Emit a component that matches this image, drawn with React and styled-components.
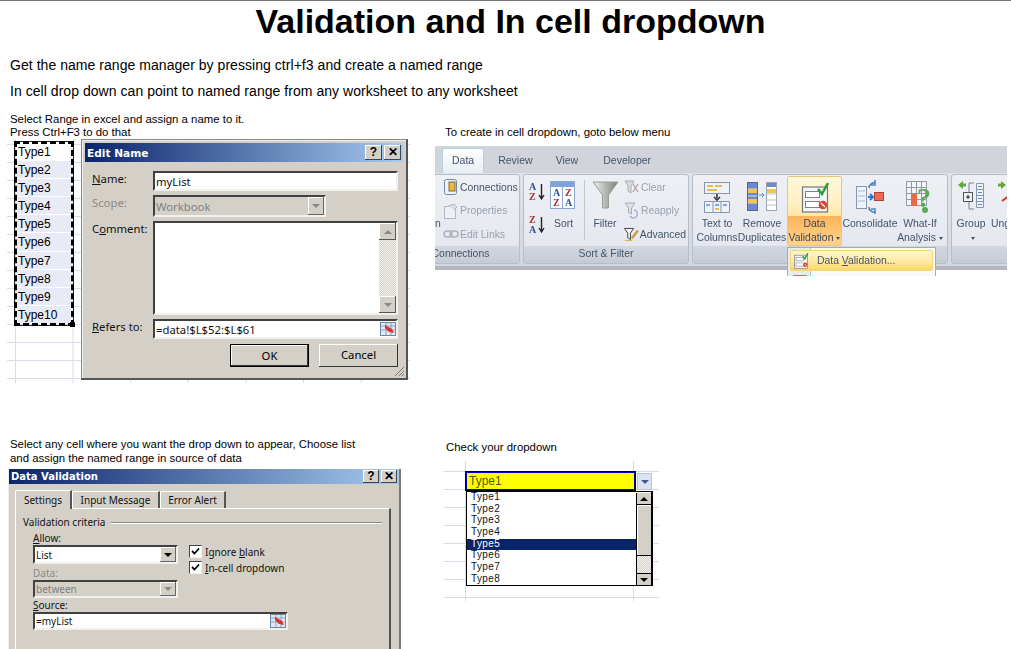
import React from "react";
import styled, { createGlobalStyle } from "styled-components";

const GlobalStyle = createGlobalStyle`
  html, body {
    margin: 0;
    padding: 0;
    background: #fff;
    overflow: hidden;
  }
`;

const Slide = styled.div`
  width: 1011px;
  height: 649px;
  overflow: hidden;
  border-top: 1px solid #777;
  box-sizing: border-box;
  font-family: "Liberation Sans", Arial, sans-serif;
  color: #000;
`;

const Title = styled.h1`
  margin: 0;
  padding-left: 10px;
  font-size: 34px;
  line-height: 41px;
  font-weight: 700;
  text-align: center;
`;

const Intro = styled.div`
  margin: 10px 0 9px 10px;
  font-size: 14px;
  line-height: 26px;
  letter-spacing: 0.045px;
`;

const Sections = styled.div`
  display: grid;
  grid-template-columns: 427px 1fr;
  grid-template-rows: 324px 1fr;
`;

const Caption = styled.div`
  margin: ${(p) => p.$top || 0}px 0 0 ${(p) => p.$left || 10}px;
  font-size: 11.4px;
  line-height: ${(p) => p.$line || 13}px;
  white-space: pre-line;
`;

const SheetGrid = styled.div`
  position: relative;
  width: ${(p) => p.$w}px;
  height: ${(p) => p.$h}px;
  margin: ${(p) => p.$mt}px 0 0 ${(p) => p.$ml}px;
  background-image:
    linear-gradient(to bottom, transparent 17px, ${(p) => p.$line} 17px, ${(p) => p.$line} 18px),
    linear-gradient(to right, transparent ${(p) => p.$cw - 1}px, ${(p) => p.$line} ${(p) => p.$cw - 1}px, ${(p) => p.$line} ${(p) => p.$cw}px);
  background-size: 100% 18px, ${(p) => p.$cw}px 100%;
  background-position: 0 ${(p) => p.$oy}px, ${(p) => p.$ox}px 0;
`;

/* marching ants range over the sheet */
const RangeBox = styled.div`
  position: absolute;
  left: 7px;
  top: 2px;
  width: 60px;
  box-sizing: border-box;
  border: 1px solid #222;
  outline: 3px dashed #000;
  outline-offset: -3px;
  padding: 1px 2px;
  font-size: 12px;
`;

const RangeCell = styled.div`
  height: 18.1px;
  line-height: 18px;
  padding-left: 1px;
  background: ${(p) => (p.$first ? "#fff" : "#e8ebf6")};
  border-bottom: 1px solid #fff;
  box-sizing: border-box;
`;

const RangeHandle = styled.i`
  position: absolute;
  right: -2px;
  bottom: -2px;
  width: 5px;
  height: 5px;
  background: #000;
`;

const Dialog = styled.div`
  position: ${(p) => (p.$floating ? "absolute" : "static")};
  left: 74px;
  top: 0;
  width: ${(p) => p.$w}px;
  height: ${(p) => (p.$floating ? "241px" : "auto")};
  margin: ${(p) => (p.$floating ? "0" : "4px 0 0 8px")};
  box-sizing: border-box;
  background: #d4d0c8;
  border: ${(p) => (p.$floating ? "1px solid #888" : "0")};
  border-right: 2px solid ${(p) => (p.$floating ? "#555" : "#777")};
  border-bottom: 2px solid #555;
  box-shadow: inset 1px 1px 0 #eee;
  padding: ${(p) => (p.$floating ? "3px 3px 0 3px" : "0 0 0 1px")};
  font-family: "Noto Sans", "Open Sans", sans-serif;
  overflow: hidden;
`;

const TitleBar = styled.div`
  display: flex;
  align-items: center;
  justify-content: space-between;
  height: ${(p) => p.$h}px;
  padding: 0 2px;
  background: linear-gradient(to right, #0a246a, #a6caf0);
  color: #fff;
  font-family: "DejaVu Sans", sans-serif;
  font-weight: 700;
  font-size: ${(p) => p.$fs}px;
`;

const TitleButtons = styled.div`
  display: flex;
  gap: 2px;
`;

const TitleButton = styled.span`
  width: ${(p) => p.$w}px;
  height: ${(p) => p.$h}px;
  line-height: ${(p) => p.$h}px;
  text-align: center;
  background: #d4d0c8;
  color: #000;
  font-size: 12px;
  font-family: "Liberation Sans", sans-serif;
  font-weight: 700;
  box-shadow: inset -1px -1px 0 #444, inset 1px 1px 0 #fff;
`;

const EditBody = styled.div`
  display: flex;
  flex-direction: column;
  gap: 4px;
  padding: 9px 5px 0 7px;
  font-size: 11.3px;
`;

const FormRow = styled.div`
  display: grid;
  grid-template-columns: 61px ${(p) => p.$field || "1fr"};
  height: ${(p) => p.$h}px;
  color: ${(p) => (p.$muted ? "#8a8a86" : "#111")};
`;

const RowLabel = styled.span`
  line-height: 16px;
`;

const InsetField = styled.div`
  position: relative;
  display: flex;
  align-items: center;
  justify-content: space-between;
  box-sizing: border-box;
  height: ${(p) => (p.$h ? `${p.$h}px` : "100%")};
  width: ${(p) => (p.$w ? `${p.$w}px` : "auto")};
  padding-left: 1px;
  border: 2px solid;
  border-color: #404040 #f2f0ec #f2f0ec #404040;
  background: ${(p) => (p.$disabled ? "#d4d0c8" : "#fff")};
  color: ${(p) => (p.$disabled ? "#808080" : "#111")};
  white-space: nowrap;
`;

const ComboButton = styled.span`
  display: flex;
  align-items: center;
  justify-content: center;
  align-self: stretch;
  width: 16px;
  background: #d4d0c8;
  box-shadow: inset -1px -1px 0 #666, inset 1px 1px 0 #fff;
`;

const ComboArrow = styled.i`
  width: 0;
  height: 0;
  border: 4px solid transparent;
  border-bottom: 0;
  border-top: 4px solid ${(p) => p.$color || "#000"};
`;

const ScrollTrack = styled.div`
  position: absolute;
  top: 0;
  right: 0;
  bottom: 0;
  width: 17px;
  display: flex;
  flex-direction: column;
  justify-content: space-between;
  background: repeating-conic-gradient(#d4d0c8 0 25%, #f4f2ee 0 50%) 0 0 / 2px 2px;
`;

const ScrollButton = styled.span`
  display: flex;
  align-items: center;
  justify-content: center;
  height: 17px;
  background: #d4d0c8;
  box-shadow: inset -1px -1px 0 #555, inset 1px 1px 0 #fff;
`;

const UpArrow = styled.i`
  width: 0;
  height: 0;
  border: 4px solid transparent;
  border-top: 0;
  border-bottom: 4px solid ${(p) => p.$color || "#888"};
`;

const ButtonRow = styled.div`
  display: flex;
  justify-content: flex-end;
  gap: 10px;
  margin-top: 2px;
`;

const PushButton = styled.div`
  width: 79px;
  height: 23px;
  line-height: 22px;
  text-align: center;
  box-sizing: border-box;
  border: ${(p) => (p.$primary ? "1px solid #000" : "0")};
  box-shadow: inset -1px -1px 0 #333, inset 1px 1px 0 #fff;
`;

const ResizeGrip = styled.svg`
  position: absolute;
  right: 1px;
  bottom: 1px;
`;

const RefIcon = () => (
  <svg width="16" height="16" viewBox="0 0 16 16">
    <rect x="0.5" y="1.500" width="15" height="13" fill="#dfe8f4" stroke="#6d88a8" />
    <path d="M1 5h14M6 2v12M11 2v12M1 9h14" stroke="#8aa4c2" />
    <path d="M5 4l7 4 2 4-5-1-4-4z" fill="#d8342a" />
  </svg>
);

const TabRow = styled.div`
  display: flex;
  align-items: flex-end;
  height: 24px;
  padding-left: 6px;
`;

const DialogTab = styled.div`
  height: ${(p) => (p.$active ? 18 : 16)}px;
  line-height: ${(p) => (p.$active ? 18 : 16)}px;
  width: ${(p) => p.$w}px;
  text-align: center;
  font-size: 10px;
  color: #111;
  border-top: 1px solid #fff;
  border-left: 1px solid #fff;
  border-right: 2px solid #555;
  box-sizing: content-box;
  margin-bottom: ${(p) => (p.$active ? "-1px" : 0)};
  background: #d4d0c8;
  position: relative;
`;

const TabPanel = styled.div`
  margin: 0 8px 0 6px;
  height: 150px;
  padding: 6px 7px;
  box-sizing: border-box;
  border-top: 1px solid #fff;
  border-left: 1px solid #fff;
  border-right: 2px solid #555;
  font-size: 10px;
  color: #111;
`;

const Legend = styled.div`
  display: flex;
  align-items: center;
  gap: 6px;
  height: 14px;
  &::after {
    content: "";
    flex: 1;
    height: 1px;
    background: #888;
    box-shadow: 0 1px 0 #fff;
  }
`;

const Criteria = styled.div`
  display: grid;
  grid-template-columns: 156px 1fr;
  padding: ${(p) => p.$pt ?? 2}px 0 0 10px;
`;

const FieldStack = styled.div`
  display: flex;
  flex-direction: column;
  grid-column: ${(p) => (p.$wide ? "1 / 3" : "auto")};
`;

const FieldLabel = styled.span`
  line-height: 14px;
  margin-top: ${(p) => p.$mt || 0}px;
  color: ${(p) => (p.$muted ? "#8a8a86" : "#111")};
`;

const CheckStack = styled.div`
  display: flex;
  flex-direction: column;
  gap: 3px;
  padding-top: 14px;
`;

const CheckRow = styled.div`
  display: flex;
  align-items: center;
  gap: 3px;
  height: 13px;
`;

const CheckBox = styled.span`
  display: flex;
  align-items: center;
  justify-content: center;
  width: 11px;
  height: 11px;
  border: 1px solid;
  border-color: #444 #eee #eee #444;
  background: #fff;
`;

const Check = () => (
  <svg width="9" height="9" viewBox="0 0 9 9">
    <path d="M1 4l2.500 2.500L8 1.500" fill="none" stroke="#000" strokeWidth="1.8" />
  </svg>
);

const ActiveCell = styled.div`
  position: absolute;
  left: 21px;
  top: 10px;
  width: 171px;
  height: 20px;
  box-sizing: border-box;
  border: 2px solid #0000c8;
  outline: 1px solid #000;
  outline-offset: -1px;
  background: #ff0;
  color: #55550a;
  font-size: 12px;
  line-height: 17px;
  padding-left: 2px;
`;

const CellArrow = styled.span`
  position: absolute;
  left: 193px;
  top: 12px;
  display: flex;
  align-items: center;
  justify-content: center;
  width: 15px;
  height: 17px;
  background: #dbe3f0;
  border: 1px solid #b8c4d8;
  box-sizing: border-box;
`;

const ListPopup = styled.div`
  position: absolute;
  left: 22px;
  top: 30px;
  width: 187px;
  height: 95px;
  box-sizing: border-box;
  border: 1px solid #000;
  border-right-width: 2px;
  background: #fff;
  font-size: 10px;
`;

const ListItem = styled.div`
  height: 11.7px;
  line-height: 10.4px;
  padding-left: 4px;
  width: 172px;
  letter-spacing: 0.4px;
  background: ${(p) => (p.$selected ? "#0a246a" : "transparent")};
  color: ${(p) => (p.$selected ? "#fff" : "#111")};
`;

const ListScroll = styled.div`
  position: absolute;
  right: 0;
  top: 1px;
  bottom: 0;
  width: 14px;
  border-left: 1px solid #000;
  display: flex;
  flex-direction: column;
  background: repeating-conic-gradient(#d4d0c8 0 25%, #f4f2ee 0 50%) 0 0 / 2px 2px;
`;

const ListScrollBtn = styled.span`
  display: flex;
  align-items: center;
  justify-content: center;
  height: 11px;
  background: #d4d0c8;
  margin-top: ${(p) => (p.$end ? "auto" : 0)};
  border-bottom: ${(p) => (p.$end ? 0 : "1px solid #000")};
  border-top: ${(p) => (p.$end ? "1px solid #000" : 0)};
`;

const ListThumb = styled.span`
  height: 50px;
  background: #d4d0c8;
  border-bottom: 1px solid #000;
  box-shadow: inset 1px 1px 0 #fff;
`;

/* ribbon */
const Ribbon = styled.div`
  position: relative;
  width: 572px;
  height: 130px;
  margin: 7px 0 0 8px;
  font-family: "Liberation Sans", Arial, sans-serif;
  font-size: 10.4px;
  color: #44546a;
  filter: blur(0.3px);
`;

const TabStrip = styled.div`
  display: flex;
  align-items: flex-end;
  height: 27px;
  padding-left: 7px;
  background: #d1d5db;
  font-size: 10.5px;
`;

const RibbonTab = styled.div`
  height: 24px;
  line-height: 22px;
  margin-right: ${(p) => p.$gap}px;
  padding: 0 ${(p) => (p.$active ? 9 : 0)}px;
  border: ${(p) => (p.$active ? "1px solid #b4d4dc" : "0")};
  border-bottom: 0;
  border-radius: 3px 3px 0 0;
  background: ${(p) => (p.$active ? "linear-gradient(#fdfefe, #e8eef5)" : "transparent")};
`;

const RibbonBody = styled.div`
  display: flex;
  gap: 3px;
  height: 97px;
  overflow: hidden;
  box-sizing: border-box;
  padding: 1px 0 2px;
  background: linear-gradient(#dfe3ea, #d3d8e0);
  border-bottom: 4px solid #b4b8be;
`;

const Group = styled.div`
  position: relative;
  flex: none;
  display: flex;
  flex-direction: column;
  width: ${(p) => p.$w}px;
  margin-left: ${(p) => p.$ml || 0}px;
  box-sizing: border-box;
  border: 1px solid #b8bec8;
  border-radius: 3px;
  background: linear-gradient(#eef0f5, #e2e6ed);
`;

const GroupContent = styled.div`
  flex: 1;
  display: flex;
  padding: ${(p) => p.$pad || "1px 2px 0"};
  gap: ${(p) => p.$gap || 0}px;
  min-height: 0;
`;

const GroupLabel = styled.div`
  height: 17px;
  line-height: 16px;
  text-align: center;
  white-space: nowrap;
  background: linear-gradient(#d2d7df, #c6ccd5);
`;

const BigButton = styled.div`
  flex: none;
  width: ${(p) => p.$w}px;
  display: flex;
  flex-direction: column;
  align-items: center;
  text-align: center;
  line-height: 14px;
  white-space: nowrap;
  padding-top: 3px;
  & > svg {
    flex: none;
    height: 36px;
    margin-bottom: 2px;
  }
`;

const ButtonText = styled.span`
  display: block;
`;

const SplitButton = styled(BigButton)`
  height: 70px;
  box-sizing: border-box;
  padding-top: 2px;
  border: 1px solid #e4c880;
  border-radius: 2px;
  background: linear-gradient(#fff8dc 0, #fff0c0 40%, #ffe7a4 57%, #fdb45c 58%, #ffd48a 100%);
  color: #3c4658;
`;

const SmallColumn = styled.div`
  flex: none;
  display: flex;
  flex-direction: column;
  justify-content: space-between;
  padding: ${(p) => p.$pad};
  margin-left: ${(p) => p.$ml || 0}px;
  width: ${(p) => p.$w}px;
  height: 68px;
  box-sizing: border-box;
`;

const SmallButton = styled.div`
  display: flex;
  align-items: center;
  gap: 1px;
  height: 16px;
  white-space: nowrap;
  color: ${(p) => (p.$muted ? "#9aa2ae" : "#44546a")};
`;

const GroupDivider = styled.i`
  flex: none;
  width: 1px;
  height: 60px;
  margin: 4px 6px 0 7px;
  background: #c2c7cf;
`;

const ClippedLabel = styled.span`
  position: absolute;
  left: 33px;
  top: 43px;
`;

const Caret = styled.i`
  display: inline-block;
  margin-left: 3px;
  vertical-align: middle;
  border: 2.5px solid transparent;
  border-bottom: 0;
  border-top: 3px solid #44546a;
`;

const ValidationMenu = styled.div`
  position: absolute;
  left: 352px;
  top: 101px;
  width: 149px;
  height: 29px;
  box-sizing: border-box;
  border: 1px solid #a8acb2;
  border-bottom: 0;
  padding: 2px 2px 0;
  background: linear-gradient(to right, #e9ecef 22px, #c5c5c5 22px, #c5c5c5 23px, #fafafa 23px);
  overflow: hidden;
`;

const MenuItem = styled.div`
  display: flex;
  align-items: center;
  gap: 8px;
  height: 21px;
  padding-left: 2px;
  border: 1px solid #f4d47c;
  box-sizing: border-box;
  border-radius: 2px;
  background: linear-gradient(#fff6cf, #ffeaa0 55%, #ffd768);
`;

const MenuStub = styled.span`
  display: block;
  margin: 1px 0 0 3px;
`;

/* ribbon icons */
const SmallSort = ({ down }) => (
  <svg width="17" height="22" viewBox="0 0 17 22" fontFamily="Liberation Serif, serif" fontWeight="700" fontSize="10">
    <text x="0" y="9" fill={down ? "#a03038" : "#2a4f9c"}>{down ? "Z" : "A"}</text>
    <text x="0" y="19" fill={down ? "#2a4f9c" : "#a03038"}>{down ? "A" : "Z"}</text>
    <path d="M12.500 3v14M10 14l2.500 4 2.500-4" stroke="#222" strokeWidth="1.4" fill="none" />
  </svg>
);

const SortIcon = () => (
  <svg width="27" height="36" viewBox="0 0 27 36" fontFamily="Liberation Serif, serif" fontWeight="700" fontSize="10">
    <rect x="0.5" y="2.500" width="24" height="27" fill="#fff" stroke="#8ca6cc" />
    <rect x="1" y="3" width="23" height="5" fill="#7da2dc" />
    <path d="M12.500 8v21" stroke="#8ca6cc" />
    <text x="3" y="17" fill="#2a4f9c">A</text>
    <text x="3" y="27" fill="#a03038">Z</text>
    <text x="15" y="17" fill="#a03038">Z</text>
    <text x="15" y="27" fill="#2a4f9c">A</text>
  </svg>
);

const FunnelIcon = () => (
  <svg width="27" height="36" viewBox="0 0 27 36">
    <defs>
      <linearGradient id="fun" x1="0" x2="1" y1="0" y2="0">
        <stop offset="0" stopColor="#eef0ee" />
        <stop offset="1" stopColor="#7c8078" />
      </linearGradient>
    </defs>
    <path d="M1 3h25L16.500 16v13h-6V16z" fill="url(#fun)" stroke="#9a9e96" />
  </svg>
);

const Mini = ({ kind }) => {
  if (kind === "conn") {
    return (
      <svg width="16" height="16" viewBox="0 0 16 16">
        <rect x="1.500" y="0.5" width="12" height="15" rx="2" fill="#eef3fa" stroke="#6f88aa" />
        <rect x="6" y="3" width="6" height="9" fill="#e7b945" stroke="#8a6a20" />
      </svg>
    );
  }
  if (kind === "props") {
    return (
      <svg width="16" height="16" viewBox="0 0 16 16">
        <rect x="1.500" y="3.500" width="11" height="12" fill="#eef0f3" stroke="#b4bac2" />
        <path d="M5 3l6-2 3 3-3 3" fill="#d8dbdf" stroke="#b4bac2" />
      </svg>
    );
  }
  if (kind === "links") {
    return (
      <svg width="16" height="16" viewBox="0 0 16 16">
        <rect x="1" y="5" width="8" height="6" rx="3" fill="none" stroke="#aeb4bc" strokeWidth="1.5" />
        <rect x="7" y="5" width="8" height="6" rx="3" fill="none" stroke="#aeb4bc" strokeWidth="1.5" />
      </svg>
    );
  }
  if (kind === "clear") {
    return (
      <svg width="16" height="16" viewBox="0 0 16 16">
        <path d="M1 2h9L7 7v7L4 12V7z" fill="#d7dadf" stroke="#a8aeb6" />
        <path d="M9 5l5 8M14 5l-5 8" stroke="#b6a4a6" strokeWidth="1.4" />
      </svg>
    );
  }
  if (kind === "reapply") {
    return (
      <svg width="16" height="18" viewBox="0 0 16 18">
        <path d="M1 1h10L7.500 6v6l-3-1.500V6z" fill="#dfe2e6" stroke="#a8aeb6" />
        <path d="M10 8a4 4 0 1 1-4 6" fill="none" stroke="#a8b0cc" strokeWidth="1.5" />
      </svg>
    );
  }
  return (
    <svg width="16" height="16" viewBox="0 0 16 16">
      <path d="M0.5 2h10L7 7v7L4 12V7z" fill="#f2f2ee" stroke="#3c3c3c" />
      <path d="M8 12l6-8 1.500 1-6 8z" fill="#e8a82c" stroke="#8a6414" strokeWidth="0.5" />
      <path d="M1 15h8" stroke="#d8b030" />
    </svg>
  );
};

const TextColumnsIcon = () => (
  <svg width="38" height="36" viewBox="0 0 38 36">
    <rect x="6.500" y="3.500" width="25" height="11" fill="#eef3fa" stroke="#8796ac" />
    <path d="M9 7h6M17 7h7M9 11h10" stroke="#f0a820" strokeWidth="1.6" />
    <path d="M19 15v4M16 18l3 3 3-3" stroke="#333" strokeWidth="1.6" fill="none" />
    <path d="M6.500 22.500h25v11h-25zM15 22v12M23 22v12" fill="#eef3fa" stroke="#8796ac" />
    <path d="M17 26h4M8 26h4M25 26h4" stroke="#5c8cd8" strokeWidth="1.4" />
    <path d="M17 30h4" stroke="#f0a820" strokeWidth="1.6" />
  </svg>
);

const RemoveDuplicatesIcon = () => (
  <svg width="34" height="36" viewBox="0 0 34 36">
    <rect x="2.500" y="3.500" width="10" height="28" fill="#6f88c8" stroke="#52689c" />
    <path d="M3 10h9M3 17h9M3 24h9" stroke="#d8e0f0" />
    <rect x="3" y="10" width="9" height="4" fill="#f2c64c" />
    <rect x="3" y="20" width="9" height="4" fill="#f2c64c" />
    <path d="M14 16h5M17 14l2 2-2 2" stroke="#5c8cd8" fill="none" />
    <rect x="21.500" y="3.500" width="10" height="28" fill="#fff" stroke="#9ca8b8" />
    <rect x="22" y="4" width="9" height="4" fill="#6f88c8" />
    <rect x="22" y="10" width="9" height="4" fill="#f2c64c" />
    <path d="M22 15h9M22 21h9M22 26h9" stroke="#b8c0cc" />
  </svg>
);

const ValidationIcon = ({ small }) => (
  <svg width={small ? 16 : 28} height={small ? 17 : 36} viewBox="0 0 28 32">
    <rect x="1.500" y="6" width="25" height="25" fill="#f4f5f6" stroke="#6e7684" strokeWidth="1.2" />
    <rect x="4.500" y="10.500" width="14" height="6" fill="#fff" stroke="#7a8290" />
    <rect x="4.500" y="20.500" width="14" height="6" fill="#fff" stroke="#7a8290" />
    <path d="M17 8l4 5 6-11" fill="none" stroke="#2e9e38" strokeWidth="2.6" />
    <circle cx="22" cy="24" r="4.2" fill="#d8432e" />
    <path d="M20 22l4 4" stroke="#fff" strokeWidth="1.3" />
  </svg>
);

const ConsolidateIcon = () => (
  <svg width="30" height="36" viewBox="0 0 30 36">
    <rect x="1.500" y="7.500" width="10" height="22" fill="#eef3fa" stroke="#8796ac" />
    <path d="M3 12h7M3 17h7M3 22h7" stroke="#a8b8d0" />
    <path d="M13 18h4M15 15l3 3-3 3" stroke="#2f78d8" strokeWidth="2" fill="none" />
    <rect x="19.500" y="13.500" width="9" height="8" fill="#ee6a50" stroke="#b04030" />
    <path d="M14 9a5 5 0 0 1 6-5M20 1v5h-4M14 28a5 5 0 0 0 6 5M20 35v-5h-4" fill="none" stroke="#5484c8" strokeWidth="1.6" />
  </svg>
);

const WhatIfIcon = () => (
  <svg width="28" height="36" viewBox="0 0 28 36">
    <path d="M0.5 2.500h20v24h-20zM0.5 8.500h20M0.5 14.500h20M0.5 20.500h20M5.500 2v25M10.500 2v25M15.500 2v25" fill="#f4f4f4" stroke="#9099a8" />
    <rect x="5" y="15" width="6" height="12" fill="#ea6a48" />
    <text x="11" y="28" fontFamily="Liberation Serif, serif" fontSize="28" fontWeight="700" fill="#5aa858">?</text>
    <circle cx="19" cy="31" r="3" fill="#5aa858" />
  </svg>
);

const GroupIcon = () => (
  <svg width="30" height="36" viewBox="0 0 30 36">
    <path d="M2 6l5-4v2.500h3v3H7V10z" fill="#5ea83c" />
    <path d="M18 4h-5v26h5" fill="none" stroke="#7a8290" />
    <rect x="7.500" y="13.500" width="9" height="9" fill="#eef0f4" stroke="#555" />
    <path d="M10 18h4M12 16v4" stroke="#222" />
    <path d="M20.500 4.500h7v24h-7zM20.500 10.500h7M20.500 16.500h7M20.500 22.500h7" fill="#eef3fa" stroke="#8796ac" />
    <path d="M22 7.500h4M22 13.500h4M22 19.500h4M22 25.500h4" stroke="#5c8cd8" />
  </svg>
);

const UngroupIcon = () => (
  <svg width="30" height="36" viewBox="0 0 30 36">
    <path d="M10 6L5 2v2.500H2v3h3V10z" fill="#5ea83c" />
    <path d="M6 22l8-6" stroke="#d8342a" strokeWidth="2" />
  </svg>
);

const rangeItems = ["Type1", "Type2", "Type3", "Type4", "Type5", "Type6", "Type7", "Type8", "Type9", "Type10"];
const listItems = rangeItems.slice(0, 8);

function EditNameDialog() {
  return (
    <Dialog $floating $w={327}>
      <TitleBar $h={19} $fs={10.6}>
        Edit Name
        <TitleButtons>
          <TitleButton $w={17} $h={15}>?</TitleButton>
          <TitleButton $w={17} $h={15}>✕</TitleButton>
        </TitleButtons>
      </TitleBar>
      <EditBody>
        <FormRow $h={20}>
          <RowLabel><u>N</u>ame:</RowLabel>
          <InsetField>myList</InsetField>
        </FormRow>
        <FormRow $h={22} $muted $field="173px">
          <RowLabel>Scope:</RowLabel>
          <InsetField $disabled>
            Workbook
            <ComboButton><ComboArrow $color="#888" /></ComboButton>
          </InsetField>
        </FormRow>
        <FormRow $h={94}>
          <RowLabel>C<u>o</u>mment:</RowLabel>
          <InsetField>
            <ScrollTrack>
              <ScrollButton><UpArrow /></ScrollButton>
              <ScrollButton><ComboArrow $color="#888" /></ScrollButton>
            </ScrollTrack>
          </InsetField>
        </FormRow>
        <FormRow $h={19}>
          <RowLabel><u>R</u>efers to:</RowLabel>
          <InsetField>
            =data!$L$52:$L$61
            <RefIcon />
          </InsetField>
        </FormRow>
        <ButtonRow>
          <PushButton $primary>OK</PushButton>
          <PushButton>Cancel</PushButton>
        </ButtonRow>
      </EditBody>
      <ResizeGrip width="12" height="12" viewBox="0 0 12 12">
        <path d="M11 2L2 11M11 6l-5 5M11 9l-2 2" stroke="#777" />
      </ResizeGrip>
    </Dialog>
  );
}

function DataRibbon() {
  return (
    <Ribbon>
      <TabStrip>
        <RibbonTab $active $gap={14}>Data</RibbonTab>
        <RibbonTab $gap={23}>Review</RibbonTab>
        <RibbonTab $gap={25}>View</RibbonTab>
        <RibbonTab $gap={0}>Developer</RibbonTab>
      </TabStrip>
      <RibbonBody>
        <Group $w={119} $ml={-34}>
          <ClippedLabel>n</ClippedLabel>
          <GroupContent $pad="4px 0 0 41px">
            <SmallColumn $w={76} $pad="0 0 5px">
              <SmallButton><Mini kind="conn" />Connections</SmallButton>
              <SmallButton $muted><Mini kind="props" />Properties</SmallButton>
              <SmallButton $muted><Mini kind="links" />Edit Links</SmallButton>
            </SmallColumn>
          </GroupContent>
          <GroupLabel>Connections</GroupLabel>
        </Group>
        <Group $w={166}>
          <GroupContent $pad="1px 0 0 5px">
            <SmallColumn $w={21} $pad="5px 0 8px">
              <SmallSort />
              <SmallSort down />
            </SmallColumn>
            <BigButton $w={27}>
              <SortIcon />
              <ButtonText>Sort</ButtonText>
            </BigButton>
            <GroupDivider />
            <BigButton $w={28}>
              <FunnelIcon />
              <ButtonText>Filter</ButtonText>
            </BigButton>
            <SmallColumn $w={62} $ml={5} $pad="3px 0 2px">
              <SmallButton $muted><Mini kind="clear" />Clear</SmallButton>
              <SmallButton $muted><Mini kind="reapply" />Reapply</SmallButton>
              <SmallButton><Mini />Advanced</SmallButton>
            </SmallColumn>
          </GroupContent>
          <GroupLabel>Sort &amp; Filter</GroupLabel>
        </Group>
        <Group $w={256}>
          <GroupContent $pad="1px 0 0 4px" $gap={2}>
            <BigButton $w={40}>
              <TextColumnsIcon />
              <ButtonText>Text to<br />Columns</ButtonText>
            </BigButton>
            <BigButton $w={46}>
              <RemoveDuplicatesIcon />
              <ButtonText>Remove<br />Duplicates</ButtonText>
            </BigButton>
            <SplitButton $w={55}>
              <ValidationIcon />
              <ButtonText>Data<br />Validation<Caret /></ButtonText>
            </SplitButton>
            <BigButton $w={52}>
              <ConsolidateIcon />
              <ButtonText>Consolidate</ButtonText>
            </BigButton>
            <BigButton $w={44}>
              <WhatIfIcon />
              <ButtonText>What-If<br />Analysis<Caret /></ButtonText>
            </BigButton>
          </GroupContent>
          <GroupLabel />
        </Group>
        <Group $w={90}>
          <GroupContent $pad="1px 0 0 5px" $gap={6}>
            <BigButton $w={28}>
              <GroupIcon />
              <ButtonText>Group<br /><Caret /></ButtonText>
            </BigButton>
            <BigButton $w={40}>
              <UngroupIcon />
              <ButtonText>Ungroup</ButtonText>
            </BigButton>
          </GroupContent>
          <GroupLabel />
        </Group>
      </RibbonBody>
      <ValidationMenu>
        <MenuItem>
          <ValidationIcon small />
          <span>Data <u>V</u>alidation...</span>
        </MenuItem>
        <MenuStub>
          <svg width="14" height="6" viewBox="0 0 14 6"><rect width="14" height="6" fill="#e26a50" /></svg>
        </MenuStub>
      </ValidationMenu>
    </Ribbon>
  );
}

function DataValidationDialog() {
  return (
    <Dialog $w={393}>
      <TitleBar $h={15} $fs={10}>
        Data Validation
        <TitleButtons>
          <TitleButton $w={16} $h={13}>?</TitleButton>
          <TitleButton $w={16} $h={13}>✕</TitleButton>
        </TitleButtons>
      </TitleBar>
      <TabRow>
        <DialogTab $active $w={54}>Settings</DialogTab>
        <DialogTab $w={85}>Input Message</DialogTab>
        <DialogTab $w={63}>Error Alert</DialogTab>
      </TabRow>
      <TabPanel>
        <Legend>Validation criteria</Legend>
        <Criteria>
          <FieldStack>
            <FieldLabel><u>A</u>llow:</FieldLabel>
            <InsetField $h={19} $w={145}>
              List
              <ComboButton><ComboArrow /></ComboButton>
            </InsetField>
            <FieldLabel $muted $mt={2}>Data:</FieldLabel>
            <InsetField $h={18} $w={145} $disabled>
              between
              <ComboButton><ComboArrow $color="#888" /></ComboButton>
            </InsetField>
          </FieldStack>
          <CheckStack>
            <CheckRow><CheckBox><Check /></CheckBox><span>Ignore <u>b</u>lank</span></CheckRow>
            <CheckRow><CheckBox><Check /></CheckBox><span><u>I</u>n-cell dropdown</span></CheckRow>
          </CheckStack>
        </Criteria>
        <Criteria $pt={0}>
          <FieldStack $wide>
            <FieldLabel><u>S</u>ource:</FieldLabel>
            <InsetField $h={18} $w={255}>
              =myList
              <RefIcon />
            </InsetField>
          </FieldStack>
        </Criteria>
      </TabPanel>
    </Dialog>
  );
}

function DropdownCheck() {
  return (
    <SheetGrid $w={215} $h={140} $mt={7} $ml={17} $line="#d4dbea" $cw={168} $ox={-146} $oy={-7}>
      <ActiveCell>Type1</ActiveCell>
      <CellArrow><ComboArrow $color="#3c5a98" /></CellArrow>
      <ListPopup>
        {listItems.map((t) => (
          <ListItem key={t} $selected={t === "Type5"}>{t}</ListItem>
        ))}
        <ListScroll>
          <ListScrollBtn><UpArrow $color="#000" /></ListScrollBtn>
          <ListThumb />
          <ListScrollBtn $end><ComboArrow /></ListScrollBtn>
        </ListScroll>
      </ListPopup>
    </SheetGrid>
  );
}

export default function App() {
  return (
    <>
      <GlobalStyle />
      <Slide>
        <Title>Validation and In cell dropdown</Title>
        <Intro>
          <div>Get the name range manager by pressing ctrl+f3 and create a named range</div>
          <div>In cell drop down can point to named range from any worksheet to any worksheet</div>
        </Intro>
        <Sections>
          <div>
            <Caption>{"Select Range in excel and assign a name to it.\nPress Ctrl+F3 to do that"}</Caption>
            <SheetGrid $w={403} $h={244} $mt={0} $ml={7} $line="#d8dde9" $cw={57.6} $ox={9} $oy={-12}>
              <RangeBox>
                {rangeItems.map((t, i) => (
                  <RangeCell key={t} $first={i === 0}>{t}</RangeCell>
                ))}
                <RangeHandle />
              </RangeBox>
              <EditNameDialog />
            </SheetGrid>
          </div>
          <div>
            <Caption $top={13} $left={18}>To create in cell dropdown, goto below menu</Caption>
            <DataRibbon />
          </div>
          <div>
            <Caption $line={14}>{"Select any cell where you want the drop down to appear, Choose list\nand assign the named range in source of data"}</Caption>
            <DataValidationDialog />
          </div>
          <div>
            <Caption $top={4} $left={19}>Check your dropdown</Caption>
            <DropdownCheck />
          </div>
        </Sections>
      </Slide>
    </>
  );
}
